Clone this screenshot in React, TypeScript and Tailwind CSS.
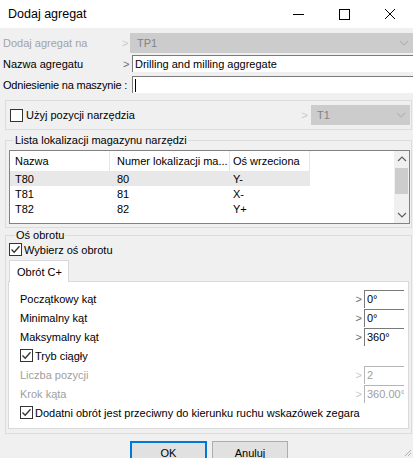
import React from 'react';

const Check = ({ checked = false }: { checked?: boolean }) => (
  <div className="w-[13px] h-[13px] border border-[#333333] bg-white flex items-center justify-center shrink-0">
    {checked && (
      <svg width="11" height="11" viewBox="0 0 11 11">
        <path d="M1.5 5.5 L4.2 8.3 L9.5 2.2" stroke="#333333" strokeWidth="1.3" fill="none" />
      </svg>
    )}
  </div>
);

const Chevron = ({ color = '#bdbdbd' }: { color?: string }) => (
  <svg width="10" height="6" viewBox="0 0 10 6">
    <path d="M1 1 L5 5 L9 1" stroke={color} strokeWidth="1.2" fill="none" />
  </svg>
);

const ValueRow = ({ label, value, disabled = false }: { label: string; value: string; disabled?: boolean }) => (
  <div className="h-[19px] flex items-center">
    <span className={disabled ? 'text-[#a0a0a0]' : 'text-black'}>{label}</span>
    <span className={`ml-auto mr-[2px] text-[11px] ${disabled ? 'text-[#c8c8c8]' : 'text-[#6d6d6d]'}`}>&gt;</span>
    <div
      className={`w-[40px] h-[18px] border-t border-l bg-white pl-[2px] leading-[17px] whitespace-nowrap overflow-hidden ${
        disabled ? 'border-[#b5b5b5] text-[#a0a0a0]' : 'border-[#7a7a7a] text-black'
      }`}
    >
      {value}
    </div>
  </div>
);

const rows = [
  { name: 'T80', num: '80', axis: 'Y-', selected: true },
  { name: 'T81', num: '81', axis: 'X-', selected: false },
  { name: 'T82', num: '82', axis: 'Y+', selected: false },
];

export default function App() {
  return (
    <div className="w-[413px] h-[458px] overflow-hidden bg-[#f0f0f0] relative font-['Liberation_Sans',Arial,sans-serif] text-[11px] leading-[14px] text-black">
      {/* Title bar */}
      <div className="h-[28px] bg-white flex items-center text-[12.5px]">
        <span className="ml-[8px] text-black">Dodaj agregat</span>
        <div className="ml-auto flex items-center">
          <div className="w-[46px] h-[28px] flex items-center justify-center">
            <div className="w-[11px] h-px bg-black" />
          </div>
          <div className="w-[46px] h-[28px] flex items-center justify-center">
            <div className="w-[11px] h-[11px] border border-black" />
          </div>
          <div className="w-[46px] h-[28px] flex items-center justify-center">
            <svg width="12" height="12" viewBox="0 0 12 12">
              <path d="M1 1 L11 11 M11 1 L1 11" stroke="#000" strokeWidth="1" />
            </svg>
          </div>
        </div>
      </div>

      {/* Top fields */}
      <div className="mt-[5px] h-[20px] flex items-center">
        <span className="ml-[3px] w-[119px] text-[#a3a3a3]">Dodaj agregat na</span>
        <span className="w-[8px] text-[#c8c8c8]">&gt;</span>
        <div className="flex-1 h-[20px] bg-[#cccccc] flex items-center pl-[7px] text-[#838383]">
          TP1
          <span className="ml-auto mr-[4px]"><Chevron color="#b5b5b5" /></span>
        </div>
      </div>
      <div className="mt-[2px] h-[17px] flex items-center">
        <span className="ml-[3px] w-[120px]">Nazwa agregatu</span>
        <span className="w-[9px] text-[#6d6d6d]">&gt;</span>
        <div className="flex-1 h-[17px] bg-white border-t border-l border-[#7a7a7a] pl-[2px] leading-[16px]">
          Drilling and milling aggregate
        </div>
      </div>
      <div className="mt-[4px] h-[17px] flex items-center">
        <span className="ml-[3px] w-[129px] whitespace-nowrap tracking-[-0.2px]">Odniesienie na maszynie :</span>
        <div className="flex-1 h-[17px] bg-white border-t border-l border-[#7a7a7a] pl-[2px] flex items-center">
          <div className="w-px h-[13px] bg-black" />
        </div>
      </div>

      <div className="pl-[5px] pr-[1px]">
        {/* Tool position group */}
        <div className="mt-[7px] h-[30px] border border-[#dcdcdc] flex items-center pl-[4px] pr-px">
          <Check />
          <span className="ml-[3px]">Użyj pozycji narzędzia</span>
          <span className="ml-auto mr-[3px] text-[#c8c8c8]">&gt;</span>
          <div className="w-[99px] h-[20px] bg-[#cccccc] flex items-center pl-[6px] text-[#838383]">
            T1
            <span className="ml-auto mr-[4px]"><Chevron color="#b5b5b5" /></span>
          </div>
        </div>

        {/* Magazine list group */}
        <div className="mt-[10px] border border-[#dcdcdc] pl-[3px] pr-px pb-[3px]">
          <div className="-mt-[8px] ml-[5px] w-fit bg-[#f0f0f0] px-px">Lista lokalizacji magazynu narzędzi</div>
          <div className="mt-[3px] h-[74px] border border-[#828282] bg-white flex overflow-hidden">
            <div className="flex-1">
              <div className="h-[20px] flex items-center">
                <div className="w-[100px] h-full pl-[5px] flex items-center border-r border-[#e5e5e5]">Nazwa</div>
                <div className="w-[120px] h-full pl-[7px] flex items-center border-r border-[#e5e5e5] whitespace-nowrap">Numer lokalizacji ma...</div>
                <div className="w-[80px] h-full pl-[3px] flex items-center border-r border-[#e5e5e5] whitespace-nowrap">Oś wrzeciona</div>
              </div>
              {rows.map((r) => (
                <div key={r.name} className={`h-[15px] w-[300px] flex items-center ${r.selected ? 'bg-[#e8e8e8]' : ''}`}>
                  <div className="w-[100px] pl-[5px]">{r.name}</div>
                  <div className="w-[120px] pl-[7px]">{r.num}</div>
                  <div className="w-[80px] pl-[3px]">{r.axis}</div>
                </div>
              ))}
            </div>
            <div className="w-[15px] bg-[#f0f0f0] flex flex-col items-center">
              <div className="h-[17px] flex items-center justify-center rotate-180">
                <Chevron color="#606060" />
              </div>
              <div className="w-[13px] h-[26px] bg-[#cdcdcd]" />
              <div className="flex-1" />
              <div className="h-[17px] flex items-center justify-center">
                <Chevron color="#606060" />
              </div>
            </div>
          </div>
        </div>

        {/* Rotation axis group */}
        <div className="mt-[7px] border border-[#dcdcdc] pl-[2px] pr-[2px] pb-[4px]">
          <div className="-mt-[8px] ml-[7px] w-fit bg-[#f0f0f0] px-px">Oś obrotu</div>
          <div className="mt-[1px] h-[13px] flex items-center ml-[1px]">
            <Check checked />
            <span className="ml-[2px]">Wybierz oś obrotu</span>
          </div>
          <div className="mt-[4px] ml-px w-[60px] h-[22px] bg-white border border-b-0 border-[#d9d9d9] flex items-center pl-[7px] whitespace-nowrap relative z-10">
            Obrót C+
          </div>
          <div className="-mt-px h-[148px] bg-white border border-[#d9d9d9] pt-[7px] pl-[11px] pr-[4px]">
            <ValueRow label="Początkowy kąt" value="0°" />
            <ValueRow label="Minimalny kąt" value="0°" />
            <ValueRow label="Maksymalny kąt" value="360°" />
            <div className="h-[19px] flex items-center">
              <Check checked />
              <span className="ml-[2px]">Tryb ciągły</span>
            </div>
            <ValueRow label="Liczba pozycji" value="2" disabled />
            <ValueRow label="Krok kąta" value="360.00°" disabled />
            <div className="h-[19px] flex items-center">
              <Check checked />
              <span className="ml-[2px]">Dodatni obrót jest przeciwny do kierunku ruchu wskazówek zegara</span>
            </div>
          </div>
        </div>
      </div>

      {/* Buttons */}
      <div className="mt-[7px] flex gap-[5px] pl-[130px]">
        <button className="w-[77px] h-[23px] bg-[#e1e1e1] border-2 border-[#0078d7]">OK</button>
        <button className="w-[76px] h-[23px] bg-[#e1e1e1] border border-[#adadad]">Anuluj</button>
      </div>

      {/* resize grip */}
      <svg className="absolute right-[1px] bottom-[1px]" width="10" height="10" viewBox="0 0 10 10">
        <path d="M9 3 L3 9 M9 6 L6 9" stroke="#b0b0b0" strokeWidth="1" />
      </svg>
    </div>
  );
}
